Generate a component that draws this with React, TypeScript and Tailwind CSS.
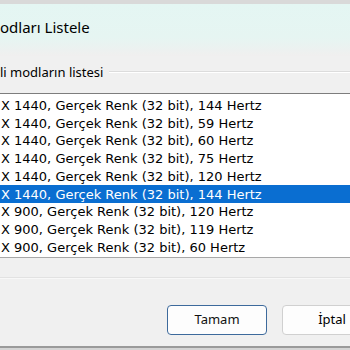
const modes = [
  { res: '2560 ', rest: 'X 1440, Gerçek Renk (32 bit), 144 Hertz' },
  { res: '2560 ', rest: 'X 1440, Gerçek Renk (32 bit), 59 Hertz' },
  { res: '2560 ', rest: 'X 1440, Gerçek Renk (32 bit), 60 Hertz' },
  { res: '2560 ', rest: 'X 1440, Gerçek Renk (32 bit), 75 Hertz' },
  { res: '2560 ', rest: 'X 1440, Gerçek Renk (32 bit), 120 Hertz' },
  { res: '2560 ', rest: 'X 1440, Gerçek Renk (32 bit), 144 Hertz', selected: true },
  { res: '1440 ', rest: 'X 900, Gerçek Renk (32 bit), 120 Hertz' },
  { res: '1440 ', rest: 'X 900, Gerçek Renk (32 bit), 119 Hertz' },
  { res: '1440 ', rest: 'X 900, Gerçek Renk (32 bit), 60 Hertz' },
]

// text whose start is cut off by the left edge of the crop
function Clipped({ hidden, children }: { hidden: string; children: React.ReactNode }) {
  return (
    <div className="flex items-center whitespace-pre">
      <span className="flex w-0 shrink-0 justify-end">{hidden}</span>
      <span>{children}</span>
    </div>
  )
}

export default function App() {
  return (
    <div className="flex h-[350px] w-[350px] flex-col overflow-hidden bg-[#f0f0f0] font-['Noto_Sans',sans-serif] text-black">
      <div className="h-[4px] shrink-0 bg-[#d9d9d9]" />

      <div className="flex h-[52px] shrink-0 items-start bg-gradient-to-b from-[#e4f6f3] via-[#e6f5f2] via-65% to-[#f0efef] pt-[14px] text-[15px] leading-[18px]">
        <Clipped hidden="Tüm M">odları Listele</Clipped>
      </div>

      <div className="mt-[8px] flex h-[16px] shrink-0 items-center text-[13px] leading-[16px]">
        <Clipped hidden="Geçer">li modların listesi</Clipped>
        <div className="ml-[6px] flex-1 border-t border-b border-t-[#dcdcdc] border-b-white" />
      </div>

      <div className="mt-[13px] flex h-[165px] shrink-0 flex-col border-y border-t-[#7d7d7d] border-b-[#a8a8a8] bg-white pt-[3px] font-['DejaVu_Sans',sans-serif] text-[13px]">
        {modes.map((m, i) => (
          <div
            key={i}
            className={`flex h-[17.7px] shrink-0 items-center pl-[1px] ${
              m.selected ? 'bg-[#0a6ed1] text-white' : ''
            }`}
          >
            <Clipped hidden={m.res}>{m.rest}</Clipped>
          </div>
        ))}
      </div>

      <div className="mt-[19px] h-0 shrink-0 border-t border-b border-t-[#e2e2e2] border-b-[#f8f8f8]" />

      <div className="flex flex-1 items-start justify-end gap-[15px] pt-[26px] font-['Noto_Sans',sans-serif] text-[13px]">
        <button className="flex h-[30px] w-[100px] items-center justify-center rounded-[4px] border-[1.5px] border-[#3d6a9c] bg-[#fdfdfd] text-[#111]">
          Tamam
        </button>
        <button className="-mr-[32px] flex h-[30px] w-[100px] items-center justify-center rounded-[4px] border border-[#d0d0d0] bg-[#fdfdfd]">
          İptal
        </button>
      </div>

      <div className="h-[2px] shrink-0 bg-[#9a9a9a]" />
      <div className="h-[2px] shrink-0 bg-[#d4d4d4]" />
    </div>
  )
}
